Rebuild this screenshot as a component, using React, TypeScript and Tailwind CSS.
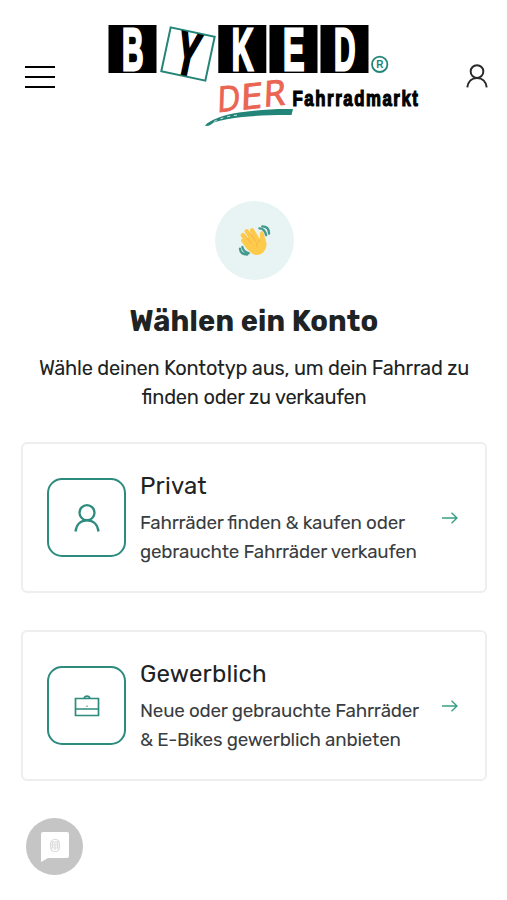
import React from "react";

const accounts = [
  {
    title: "Privat",
    lines: ["Fahrräder finden & kaufen oder", "gebrauchte Fahrräder verkaufen"],
    icon: <UserIcon className="h-7 w-[26px]" />,
  },
  {
    title: "Gewerblich",
    lines: ["Neue oder gebrauchte Fahrräder", "& E-Bikes gewerblich anbieten"],
    icon: <BriefcaseIcon />,
  },
];

function UserIcon({ className }: { className: string }) {
  return (
    <svg viewBox="0 0 26 28" className={className} fill="none" stroke="currentColor" strokeWidth="2.3">
      <circle cx="13" cy="8.7" r="7.5" />
      <path d="M1.5 27.5C2.3 20.5 6.8 16.3 13 16.3s10.7 4.2 11.5 11.2" />
    </svg>
  );
}

function BriefcaseIcon() {
  return (
    <svg viewBox="0 0 26 22" className="h-[22px] w-[26px]" fill="none" stroke="currentColor" strokeWidth="1.7">
      <path d="M1.5 3.5h23v17h-23zM1.5 14h23" />
      <path d="M10 3.5c.5-1.6 1.5-2.3 3-2.3s2.5.7 3 2.3" />
      <path d="M13 10.5v1.5" strokeWidth="1" />
    </svg>
  );
}

function ArrowIcon() {
  return (
    <svg viewBox="0 0 16 12" className="h-3 w-4" fill="none" stroke="currentColor" strokeWidth="1.4">
      <path d="M0 6h15M9.5 .8 15 6l-5.5 5.2" />
    </svg>
  );
}

function Tile({ x, letter }: { x: number; letter: string }) {
  return (
    <g>
      <rect x={x} y="5" width="48" height="48" fill="#000" />
      <text
        x={x + 13.5}
        y="50"
        fontSize="60"
        fontWeight="700"
        fill="#fff"
        stroke="#fff"
        strokeWidth="2.8"
        textLength="21.5"
        lengthAdjust="spacingAndGlyphs"
      >
        {letter}
      </text>
    </g>
  );
}

function Logo() {
  return (
    <svg
      viewBox="0 0 320 110"
      className="h-[110px] w-[320px] overflow-visible"
      fontFamily="'Liberation Sans', sans-serif"
    >
      <Tile x={8.5} letter="B" />
      <Tile x={118.3} letter="K" />
      <Tile x={169.5} letter="E" />
      <Tile x={220.5} letter="D" />
      <g transform="rotate(12 88 34)">
        <rect x="65.5" y="11.5" width="45" height="45" fill="#fff" stroke="#238577" strokeWidth="2" />
        <text
          x="77.5"
          y="54.5"
          fontSize="59"
          fontWeight="700"
          stroke="#000"
          strokeWidth="3"
          textLength="21.5"
          lengthAdjust="spacingAndGlyphs"
        >
          Y
        </text>
      </g>
      <circle cx="279.7" cy="44.3" r="7.7" fill="none" stroke="#238577" strokeWidth="1.8" />
      <text x="279.8" y="48" fontSize="10" fontWeight="700" fill="#238577" textAnchor="middle">
        R
      </text>
      <path
        d="M105 105.5c4-5 18-11 34-13 18-2.5 36-4 54-3.5l-1.5 6c-16-.2-34 .5-49 2-11 1-21 3-29 5.5-3 3-6 4-8.5 3z"
        fill="#238577"
      />
      <path d="M114 101.5c8-4 14-5 24-6.500" stroke="#fff" strokeWidth=".8" strokeDasharray="3 4" fill="none" />
      <g
        fontFamily="'Open Sans', sans-serif"
        fontSize="35"
        fill="#ea6553"
        stroke="#ea6553"
        strokeWidth="1"
        transform="translate(119 92) rotate(-6) skewX(-8)"
      >
        <text x="-2" textLength="23" lengthAdjust="spacingAndGlyphs">
          D
        </text>
        <text x="21.5" y="0" textLength="22" lengthAdjust="spacingAndGlyphs">
          E
        </text>
        <text x="44.5" y="-0.5" textLength="22" lengthAdjust="spacingAndGlyphs">
          R
        </text>
      </g>
      <text
        x="192.5"
        y="85.5"
        fontSize="21.5"
        fontWeight="700"
        stroke="#000"
        strokeWidth="1.2"
        letterSpacing="2"
        textLength="127"
        lengthAdjust="spacingAndGlyphs"
      >
        Fahrradmarkt
      </text>
    </svg>
  );
}

function WavingHand() {
  return (
    <svg viewBox="0 0 34 34" className="h-[33px] w-[33px]" fill="none" strokeLinecap="round">
      <path d="m5.5 17 6 8M5 11.5l9 12M9 7.5l9 13M14.5 6.5l7 12" stroke="#fdca4b" strokeWidth="4.5" />
      <path d="M5 17 17 10l6 6c-1-5-.5-9 2-8.5 2 .4 1.5 4.5 3.5 9 2.5 6-.5 13-6 15-7 2-12-3-17.5-14.5z" fill="#fdca4b" />
      <path d="m7.5 12 6 8M12 9l6 8.5" stroke="#f0ae48" strokeWidth=".8" />
      <path d="M22.5 16.5c-2.5 2-3.5 4-3 7" stroke="#f0ae48" strokeWidth=".8" />
      <path d="M22 4.5c4 0 6 2.5 7 7M25 2.500c4.5 0 7 3 7 7.5" stroke="#43998d" strokeWidth="2.4" />
      <path d="M4.5 23.5c.5 4 3 5.5 6.5 6.5M2 25.5c.5 4 3.5 6 7.5 6" stroke="#43998d" strokeWidth="2.4" />
    </svg>
  );
}

function ChatIcon() {
  return (
    <svg viewBox="0 0 28 32" className="h-8 w-7">
      <path d="M2 1h24q2 0 2 2v22q0 2-2 2H7l-7 4V3q0-2 2-2z" fill="#fff" />
      <g fill="none" stroke="#dcdcdc" strokeWidth="1.2">
        <path d="M9.5 16v-3c0-6 9-6 9 0v3c0 6-9 6-9 0zM11.5 17v-4c0-3 5-3 5 0v4M14 12v7M10 11h8M10 14h8M10 17h8" />
      </g>
    </svg>
  );
}

export default function App() {
  return (
    <main className="relative h-[900px] w-full overflow-hidden bg-white font-[Rubik,Roboto,sans-serif] text-[#202323]">
      <header className="flex h-[130px] items-start justify-between pl-[25px] pr-[19px] pt-5">
        <button aria-label="Menü" className="mt-[45.5px] flex w-[30px] flex-col gap-2">
          <span className="h-0.5 w-full bg-black" />
          <span className="h-0.5 w-full bg-black" />
          <span className="h-0.5 w-full bg-black" />
        </button>
        <div className="mr-auto ml-[45px]">
          <Logo />
        </div>
        <button aria-label="Konto" className="mt-11 text-[#29292c]">
          <UserIcon className="h-6 w-[22px]" />
        </button>
      </header>

      <section className="flex flex-col items-center pl-px pt-[71px] text-center">
        <div className="grid h-[79px] w-[79px] place-items-center rounded-full bg-[#e8f4f3]">
          <WavingHand />
        </div>
        <h1 className="mt-[21px] text-[29px] leading-10 font-bold tracking-[0.17px]">Wählen ein Konto</h1>
        <p className="mt-[13px] text-[20px] leading-[29px] tracking-[-0.22px] [font-feature-settings:'liga']">
          <span className="block whitespace-nowrap">Wähle deinen Kontotyp aus, um dein Fahrrad zu</span>
          <span className="block whitespace-nowrap">finden oder zu verkaufen</span>
        </p>
      </section>

      <section className="mt-[30px] flex flex-col gap-[37px] pl-[21px] pr-5">
        {accounts.map((account) => (
          <button
            key={account.title}
            className="flex h-[151px] w-full items-center rounded-md border-2 border-[#eeeeee] pl-6 pr-[27px] text-left"
          >
            <span className="grid h-[79px] w-[79px] shrink-0 place-items-center rounded-[15px] border-2 border-[#2d8b7e] text-[#2d8b7e]">
              {account.icon}
            </span>
            <span className="ml-[14px] flex-1">
              <span className="block pb-1 text-[24px] leading-[35px] tracking-[0.2px]">{account.title}</span>
              {account.lines.map((line) => (
                <span
                  key={line}
                  className="block whitespace-nowrap text-[18.8px] leading-[29px] tracking-[-0.2px] text-[#3a3d41] [font-feature-settings:'liga']"
                >
                  {line}
                </span>
              ))}
            </span>
            <span className="text-[#36a085]">
              <ArrowIcon />
            </span>
          </button>
        ))}
      </section>

      <button
        aria-label="Chat"
        className="absolute bottom-[25px] left-[26px] grid h-[57px] w-[57px] place-items-center rounded-full bg-[#c5c5c5]"
      >
        <ChatIcon />
      </button>
    </main>
  );
}
